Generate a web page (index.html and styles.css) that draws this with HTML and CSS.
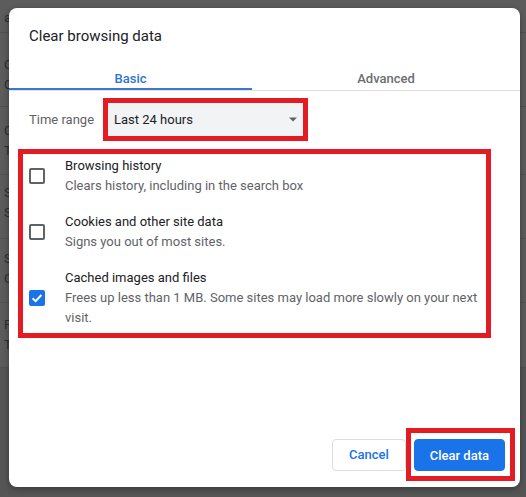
FILE: index.html
```html
<!DOCTYPE html>
<html>
<head>
<meta charset="utf-8">
<title>Clear browsing data</title>
<link rel="stylesheet" href="styles.css">
</head>
<body>
<div class="page">
  <div class="page-head"><span class="clip">advanced</span></div>
  <div class="page-row r1"><span class="clip">Clear</span><span class="clip">Clear</span></div>
  <div class="page-row r2"><span class="clip">Cookies</span><span class="clip">Third</span></div>
  <div class="page-row r3"><span class="clip">Security</span><span class="clip">Safe</span></div>
  <div class="page-row r4"><span class="clip">Site</span><span class="clip">Controls</span></div>
  <div class="page-row r5"><span class="clip">Fonts</span><span class="clip">Text</span></div>
  <div class="page-rest"></div>
</div>

<div class="dialog">
  <h1 class="title">Clear browsing data</h1>
  <div class="tabs">
    <div class="tab tab-basic active">Basic</div>
    <div class="tab tab-adv">Advanced</div>
  </div>

  <div class="range">
    <span class="range-label">Time range</span>
    <div class="select">
      <span>Last 24 hours</span>
      <svg class="arrow" width="10" height="5" viewBox="0 0 10 5"><path d="M1 0.5 L9 0.5 L5 4.5 Z" fill="#5f6368"/></svg>
    </div>
  </div>

  <div class="options">
    <div class="option">
      <span class="cb"></span>
      <div class="opt-text">
        <div class="opt-title">Browsing history</div>
        <div class="opt-sub">Clears history, including in the search box</div>
      </div>
    </div>
    <div class="option">
      <span class="cb"></span>
      <div class="opt-text">
        <div class="opt-title">Cookies and other site data</div>
        <div class="opt-sub">Signs you out of most sites.</div>
      </div>
    </div>
    <div class="option">
      <span class="cb checked"><svg width="16" height="16" viewBox="0 0 16 16"><polyline points="3.6,8.2 6.6,11.1 12.4,5" fill="none" stroke="#fff" stroke-width="2"/></svg></span>
      <div class="opt-text">
        <div class="opt-title">Cached images and files</div>
        <div class="opt-sub">Frees up less than 1 MB. Some sites may load more slowly on your next visit.</div>
      </div>
    </div>
  </div>

  <div class="footer">
    <button class="btn cancel">Cancel</button>
    <span class="btn-mark"><button class="btn primary">Clear data</button></span>
  </div>
</div>
</body>
</html>
```

FILE: styles.css
```css
* { box-sizing: border-box; }

html, body {
  margin: 0;
  padding: 0;
  width: 526px;
  height: 497px;
  overflow: hidden;
}

body {
  position: relative;
  background: #5c5c5c;
  font-family: Roboto, "Liberation Sans", Arial, sans-serif;
}

/* dimmed page behind the modal */
.page {
  display: flex;
  flex-direction: column;
  height: 497px;
  color: #2c2c2c;
  font-size: 13px;
  line-height: 20px;
}

.clip {
  display: block;
  width: 5px;
  overflow: hidden;
  white-space: nowrap;
}

.page-head {
  height: 33px;
  padding: 8px 0 0 4px;
  border-bottom: 1px solid #505050;
}

.page-row {
  padding-left: 4px;
  border-bottom: 1px solid #505050;
}

.r1 { height: 74px; padding-top: 22px; }
.r2 { height: 68px; padding-top: 14px; }
.r3 { height: 64px; padding-top: 8px; }
.r4 { height: 64px; padding-top: 10px; }
.r5 { height: 65px; padding-top: 12px; }

.page-rest {
  flex: 1;
  background: #555555;
}

/* modal */
.dialog {
  position: absolute;
  left: 9px;
  top: 8px;
  width: 511px;
  height: 479px;
  background: #ffffff;
  border-radius: 8px;
  box-shadow: 0 2px 6px rgba(0, 0, 0, 0.35);
  display: flex;
  flex-direction: column;
}

.title {
  margin: 0;
  padding: 18px 20px 0;
  font-size: 15px;
  font-weight: 400;
  line-height: 20px;
  color: #202124;
}

.tabs {
  display: flex;
  border-bottom: 1px solid #e0e0e0;
}

.tab {
  padding-top: 24px;
  line-height: 18px;
  font-size: 13px;
  font-weight: 500;
  text-align: center;
  color: #6b6e72;
  border-bottom: 2px solid transparent;
}

.tab-basic { width: 243px; }
.tab-adv { flex: 1; }

.tab.active {
  color: #2f74d0;
  border-bottom-color: #3b78c8;
}

.range {
  display: flex;
  align-items: center;
  margin-top: 12px;
  padding-left: 20px;
}

.range-label {
  width: 79px;
  font-size: 13px;
  color: #5f6368;
}

.select {
  width: 195px;
  height: 33px;
  background: #f1f3f4;
  outline: 5px solid #e31b23;
  display: flex;
  align-items: center;
  justify-content: space-between;
  padding: 0 5px 0 6px;
  font-size: 13px;
  color: #202124;
}

.arrow { display: block; }

.options {
  margin: 13px 29px 0 9px;
  border: 5px solid #e31b23;
  padding: 2px 0 5px 6px;
  display: flex;
  flex-direction: column;
  gap: 16px;
}

.option {
  display: flex;
  align-items: center;
  gap: 20px;
}

.cb {
  flex: none;
  width: 16px;
  height: 16px;
  border: 2px solid #5f6368;
  border-radius: 2px;
  position: relative;
}

.cb.checked {
  background: #1a73e8;
  border-color: #1a73e8;
}

.cb.checked svg {
  position: absolute;
  left: -2px;
  top: -2px;
}

.opt-text {
  flex: 1;
  font-size: 13px;
  line-height: 20px;
}

.opt-title { color: #202124; }
.opt-sub { color: #5f6368; }

.footer {
  margin-top: auto;
  display: flex;
  justify-content: flex-end;
  align-items: center;
  padding: 0 5px 6px 0;
}

.btn {
  height: 32px;
  padding: 0 15px;
  border-radius: 4px;
  font-family: Roboto, "Liberation Sans", Arial, sans-serif;
  font-size: 13px;
  font-weight: 500;
  cursor: pointer;
}

.cancel {
  background: #ffffff;
  border: 1px solid #dadce0;
  color: #1a73e8;
  padding: 0 16px;
}

.btn-mark {
  display: inline-flex;
  border: 5px solid #e31b23;
  padding: 6px 5px 5px 3px;
}

.primary {
  background: #1a73e8;
  border: 1px solid #1a73e8;
  color: #ffffff;
}
```
